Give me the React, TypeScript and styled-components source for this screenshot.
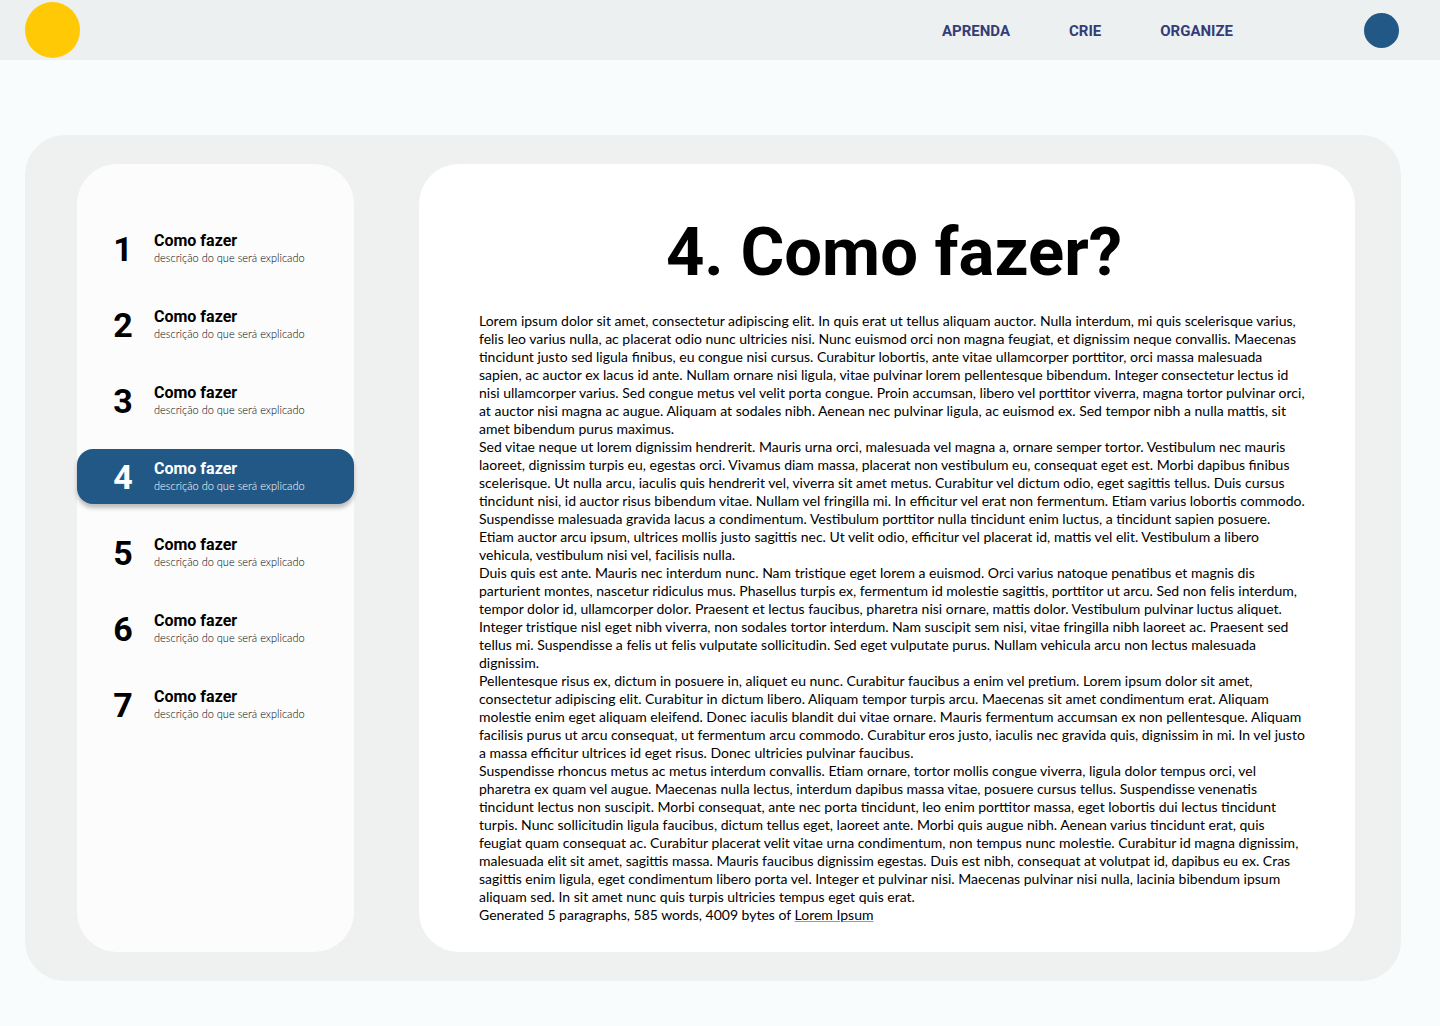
import React from "react";
import styled, { createGlobalStyle } from "styled-components";

const heading = `Roboto, "Open Sans", sans-serif`;

const GlobalStyle = createGlobalStyle`
  *, *::before, *::after { box-sizing: border-box; }
  body {
    margin: 0;
    background: #f8fcfd;
    color: #000;
    font-family: Lato, "Open Sans", sans-serif;
  }
`;

const TopBar = styled.header`
  display: flex;
  align-items: center;
  height: 60px;
  padding: 0 41px 0 25px;
  background: #ecf0f1;
`;

const Logo = styled.a`
  width: 55px;
  height: 56px;
  border-radius: 50%;
  background: #ffc905;
`;

const Nav = styled.nav`
  display: flex;
  gap: 59px;
  margin: 0 131px 0 auto;
  padding-top: 2px;
`;

const NavLink = styled.a`
  color: #353c76;
  font: 700 15px/20px ${heading};
  text-decoration: none;
`;

const Avatar = styled.button`
  width: 35px;
  height: 35px;
  padding: 0;
  border: 0;
  border-radius: 50%;
  background: #225885;
  cursor: pointer;
`;

const Panel = styled.main`
  display: flex;
  gap: 65px;
  margin: 75px 39px 45px 25px;
  padding: 29px 46px 29px 52px;
  border-radius: 40px;
  background: #eff1f1;
`;

const Sidebar = styled.nav`
  flex: 0 0 277px;
  padding: 57px 0;
  border-radius: 40px;
  background: #fcfcfc;
`;

const StepList = styled.ol`
  display: flex;
  flex-direction: column;
  gap: 21px;
  margin: 0;
  padding: 0;
  list-style: none;
`;

const Step = styled.button<{ $active: boolean }>`
  display: flex;
  align-items: center;
  gap: 21px;
  width: 100%;
  height: 55px;
  padding: 0 36px;
  border: 0;
  border-radius: 16px;
  background: ${(p) => (p.$active ? "#225885" : "transparent")};
  box-shadow: ${(p) => (p.$active ? "0 4px 4px rgba(0, 0, 0, 0.25)" : "none")};
  color: ${(p) => (p.$active ? "#fff" : "#000")};
  text-align: left;
  cursor: pointer;
`;

const StepNumber = styled.span`
  flex: 0 0 20px;
  font: 700 34px/40px ${heading};
  text-align: center;
`;

const StepText = styled.span`
  display: flex;
  flex-direction: column;
`;

const StepTitle = styled.span`
  font: 700 16px/18px ${heading};
`;

const StepDescription = styled.span`
  font: 300 11px/15px Lato, sans-serif;
  white-space: nowrap;
`;

const Article = styled.article`
  flex: 1;
  min-width: 0;
  padding: 50px 46px 28px 60px;
  border-radius: 40px;
  background: #fff;
`;

const Title = styled.h1`
  margin: 0 0 22px;
  font: 700 67px/76px ${heading};
  text-align: center;
`;

const Paragraph = styled.p`
  margin: 0;
  font-size: 14px;
  line-height: 18px;
  white-space: pre-line;
`;

const SourceLink = styled.a`
  color: inherit;
  text-decoration: underline 1px #999;
  text-underline-offset: 1px;
`;

const sections = ["Aprenda", "Crie", "Organize"];
const steps = [1, 2, 3, 4, 5, 6, 7];
const current = 4;

const paragraphs = [
  `Lorem ipsum dolor sit amet, consectetur adipiscing elit. In quis erat ut tellus aliquam auctor. Nulla interdum, mi quis scelerisque varius,
felis leo varius nulla, ac placerat odio nunc ultricies nisi. Nunc euismod orci non magna feugiat, et dignissim neque convallis. Maecenas
tincidunt justo sed ligula finibus, eu congue nisi cursus. Curabitur lobortis, ante vitae ullamcorper porttitor, orci massa malesuada
sapien, ac auctor ex lacus id ante. Nullam ornare nisi ligula, vitae pulvinar lorem pellentesque bibendum. Integer consectetur lectus id
nisi ullamcorper varius. Sed congue metus vel velit porta congue. Proin accumsan, libero vel porttitor viverra, magna tortor pulvinar orci,
at auctor nisi magna ac augue. Aliquam at sodales nibh. Aenean nec pulvinar ligula, ac euismod ex. Sed tempor nibh a nulla mattis, sit
amet bibendum purus maximus.`,
  `Sed vitae neque ut lorem dignissim hendrerit. Mauris urna orci, malesuada vel magna a, ornare semper tortor. Vestibulum nec mauris
laoreet, dignissim turpis eu, egestas orci. Vivamus diam massa, placerat non vestibulum eu, consequat eget est. Morbi dapibus finibus
scelerisque. Ut nulla arcu, iaculis quis hendrerit vel, viverra sit amet metus. Curabitur vel dictum odio, eget sagittis tellus. Duis cursus
tincidunt nisi, id auctor risus bibendum vitae. Nullam vel fringilla mi. In efficitur vel erat non fermentum. Etiam varius lobortis commodo.
Suspendisse malesuada gravida lacus a condimentum. Vestibulum porttitor nulla tincidunt enim luctus, a tincidunt sapien posuere.
Etiam auctor arcu ipsum, ultrices mollis justo sagittis nec. Ut velit odio, efficitur vel placerat id, mattis vel elit. Vestibulum a libero
vehicula, vestibulum nisi vel, facilisis nulla.`,
  `Duis quis est ante. Mauris nec interdum nunc. Nam tristique eget lorem a euismod. Orci varius natoque penatibus et magnis dis
parturient montes, nascetur ridiculus mus. Phasellus turpis ex, fermentum id molestie sagittis, porttitor ut arcu. Sed non felis interdum,
tempor dolor id, ullamcorper dolor. Praesent et lectus faucibus, pharetra nisi ornare, mattis dolor. Vestibulum pulvinar luctus aliquet.
Integer tristique nisl eget nibh viverra, non sodales tortor interdum. Nam suscipit sem nisi, vitae fringilla nibh laoreet ac. Praesent sed
tellus mi. Suspendisse a felis ut felis vulputate sollicitudin. Sed eget vulputate purus. Nullam vehicula arcu non lectus malesuada
dignissim.`,
  `Pellentesque risus ex, dictum in posuere in, aliquet eu nunc. Curabitur faucibus a enim vel pretium. Lorem ipsum dolor sit amet,
consectetur adipiscing elit. Curabitur in dictum libero. Aliquam tempor turpis arcu. Maecenas sit amet condimentum erat. Aliquam
molestie enim eget aliquam eleifend. Donec iaculis blandit dui vitae ornare. Mauris fermentum accumsan ex non pellentesque. Aliquam
facilisis purus ut arcu consequat, ut fermentum arcu commodo. Curabitur eros justo, iaculis nec gravida quis, dignissim in mi. In vel justo
a massa efficitur ultrices id eget risus. Donec ultricies pulvinar faucibus.`,
  `Suspendisse rhoncus metus ac metus interdum convallis. Etiam ornare, tortor mollis congue viverra, ligula dolor tempus orci, vel
pharetra ex quam vel augue. Maecenas nulla lectus, interdum dapibus massa vitae, posuere cursus tellus. Suspendisse venenatis
tincidunt lectus non suscipit. Morbi consequat, ante nec porta tincidunt, leo enim porttitor massa, eget lobortis dui lectus tincidunt
turpis. Nunc sollicitudin ligula faucibus, dictum tellus eget, laoreet ante. Morbi quis augue nibh. Aenean varius tincidunt erat, quis
feugiat quam consequat ac. Curabitur placerat velit vitae urna condimentum, non tempus nunc molestie. Curabitur id magna dignissim,
malesuada elit sit amet, sagittis massa. Mauris faucibus dignissim egestas. Duis est nibh, consequat at volutpat id, dapibus eu ex. Cras
sagittis enim ligula, eget condimentum libero porta vel. Integer et pulvinar nisi. Maecenas pulvinar nisi nulla, lacinia bibendum ipsum
aliquam sed. In sit amet nunc quis turpis ultricies tempus eget quis erat.`,
];

export default function App() {
  return (
    <>
      <GlobalStyle />
      <TopBar>
        <Logo href="#" aria-label="Início" />
        <Nav>
          {sections.map((name) => (
            <NavLink key={name} href={`#${name.toLowerCase()}`}>
              {name.toUpperCase()}
            </NavLink>
          ))}
        </Nav>
        <Avatar type="button" aria-label="Perfil" />
      </TopBar>
      <Panel>
        <Sidebar aria-label="Etapas">
          <StepList>
            {steps.map((n) => (
              <li key={n}>
                <Step
                  type="button"
                  $active={n === current}
                  aria-current={n === current ? "step" : undefined}
                >
                  <StepNumber>{n}</StepNumber>
                  <StepText>
                    <StepTitle>Como fazer</StepTitle>
                    <StepDescription>descrição do que será explicado</StepDescription>
                  </StepText>
                </Step>
              </li>
            ))}
          </StepList>
        </Sidebar>
        <Article>
          <Title>4. Como fazer?</Title>
          {paragraphs.map((text) => (
            <Paragraph key={text}>{text}</Paragraph>
          ))}
          <Paragraph>
            Generated 5 paragraphs, 585 words, 4009 bytes of{" "}
            <SourceLink href="#lorem-ipsum">Lorem Ipsum</SourceLink>
          </Paragraph>
        </Article>
      </Panel>
    </>
  );
}
